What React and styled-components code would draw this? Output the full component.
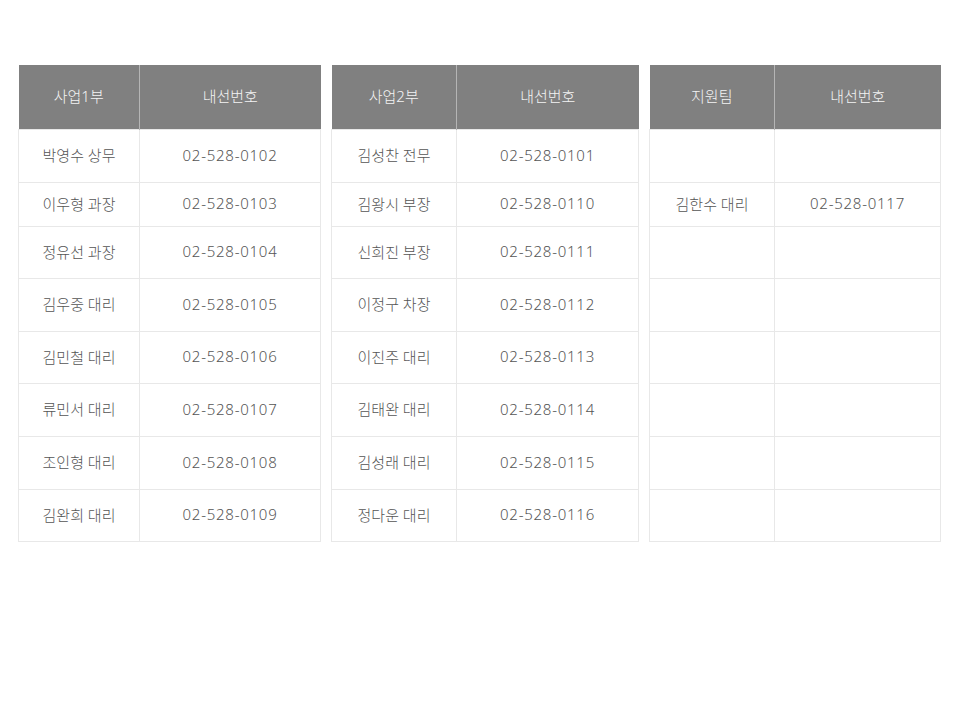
import React from "react";
import styled, { createGlobalStyle } from "styled-components";

const GlobalStyle = createGlobalStyle`
  body {
    margin: 0;
    background: #fff;
    font-family: "Noto Sans", "Noto Sans CJK KR", sans-serif;
  }
`;

const Page = styled.div`
  display: flex;
  gap: 10px;
  padding: 65px 0 0 18px;
`;

const Table = styled.table`
  border-collapse: collapse;
  table-layout: fixed;
  width: ${(p) => p.width}px;
  font-size: 15px;
  font-weight: 300;
  color: #555;
`;

const HeadCell = styled.th`
  height: 61px;
  padding: 0 0 3px;
  background: #808080;
  color: #f4f4f4;
  font-weight: 300;
  text-align: center;
  border-left: 1px solid #b5b5b5;
  &:first-child {
    border-left: 0;
  }
`;

const Row = styled.tr`
  height: ${(p) => p.h}px;
`;

const Cell = styled.td`
  padding: 0 0 3px;
  text-align: center;
  border: 1px solid #e8e8e8;
  letter-spacing: ${(p) => (p.$phone ? "0.75px" : "0")};
`;

const rowHeights = [53, 44, 52, 53, 52, 53, 53, 52];

const teams = [
  {
    name: "사업1부",
    width: 303,
    first: 121,
    rows: [
      ["박영수 상무", "02-528-0102"],
      ["이우형 과장", "02-528-0103"],
      ["정유선 과장", "02-528-0104"],
      ["김우중 대리", "02-528-0105"],
      ["김민철 대리", "02-528-0106"],
      ["류민서 대리", "02-528-0107"],
      ["조인형 대리", "02-528-0108"],
      ["김완희 대리", "02-528-0109"],
    ],
  },
  {
    name: "사업2부",
    width: 308,
    first: 125,
    rows: [
      ["김성찬 전무", "02-528-0101"],
      ["김왕시 부장", "02-528-0110"],
      ["신희진 부장", "02-528-0111"],
      ["이정구 차장", "02-528-0112"],
      ["이진주 대리", "02-528-0113"],
      ["김태완 대리", "02-528-0114"],
      ["김성래 대리", "02-528-0115"],
      ["정다운 대리", "02-528-0116"],
    ],
  },
  {
    name: "지원팀",
    width: 292,
    first: 125,
    rows: [
      ["", ""],
      ["김한수 대리", "02-528-0117"],
      ["", ""],
      ["", ""],
      ["", ""],
      ["", ""],
      ["", ""],
      ["", ""],
    ],
  },
];

export default function App() {
  return (
    <>
      <GlobalStyle />
      <Page>
        {teams.map((t) => (
          <Table key={t.name} width={t.width}>
            <colgroup>
              <col style={{ width: t.first }} />
              <col />
            </colgroup>
            <thead>
              <tr>
                <HeadCell>{t.name}</HeadCell>
                <HeadCell>내선번호</HeadCell>
              </tr>
            </thead>
            <tbody>
              {t.rows.map(([n, p], i) => (
                <Row key={i} h={rowHeights[i]}>
                  <Cell>{n}</Cell>
                  <Cell $phone>{p}</Cell>
                </Row>
              ))}
            </tbody>
          </Table>
        ))}
      </Page>
    </>
  );
}
